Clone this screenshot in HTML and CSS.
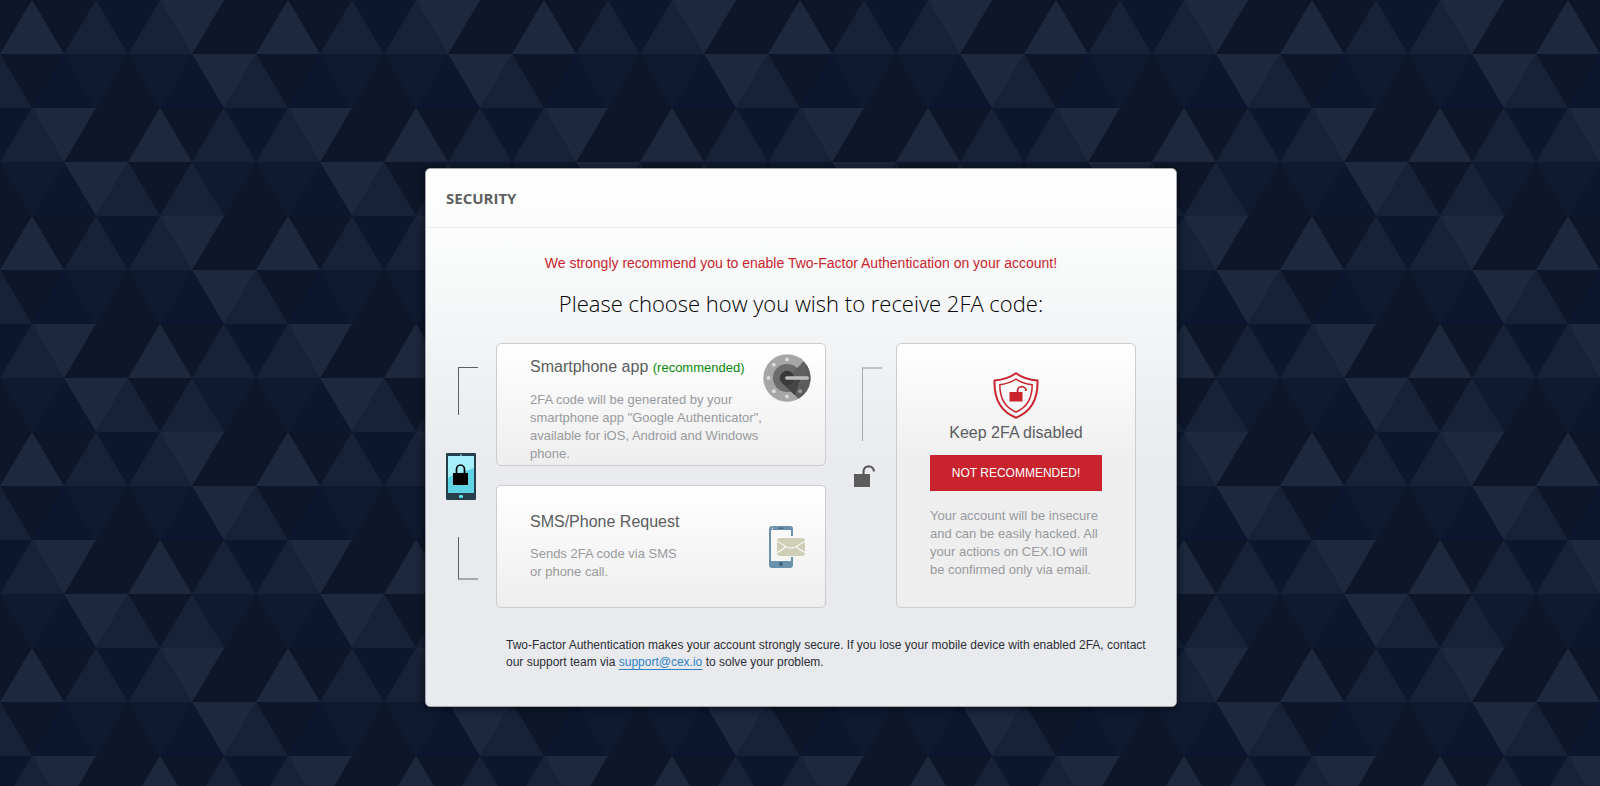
FILE: index.html
```html
<!DOCTYPE html>
<html lang="en">
<head>
    <meta charset="UTF-8">
    <meta name="viewport" content="width=device-width, initial-scale=1.0">
    <title>Security</title>
    <link rel="stylesheet" href="styles.css">
</head>
<body>

    <main class="panel">
        <header class="panel-header">
            <h1>SECURITY</h1>
        </header>

        <p class="warning">We strongly recommend you to enable Two-Factor Authentication on your account!</p>
        <h2>Please choose how you wish to receive 2FA code:</h2>

        <div class="choices">
            <!-- brackets + locked phone -->
            <div class="rail rail-on">
                <div class="bracket bracket-top"></div>
                <svg width="30" height="47" viewBox="0 0 30 47">
                    <rect width="30" height="47" rx="1" fill="#263f4b"/>
                    <rect x="2" y="3" width="26" height="37" fill="#5fd3e3"/>
                    <path d="M2 3H28V15C22 18 8 20 2 25Z" fill="#a5effb"/>
                    <rect x="14" y="1" width="2" height="2" fill="#5a9aa6"/>
                    <rect x="13" y="42" width="4" height="3" rx="1" fill="#5fe0ee"/>
                    <path d="M10.500 21V16.500a4 4.500 0 0 1 8 0V21" fill="none" stroke="#000" stroke-width="1.700"/>
                    <rect x="7" y="20" width="15" height="12" fill="#000"/>
                </svg>
                <div class="bracket bracket-bottom"></div>
            </div>

            <div class="options">
                <a href="#" class="option option-app">
                    <span class="option-text">
                        <span class="option-title">Smartphone app <small>(recommended)</small></span>
                        <span class="option-info">2FA code will be generated by your smartphone app "Google Authenticator", available for iOS, Android and Windows phone.</span>
                    </span>
                    <svg class="icon-app" width="48" height="48" viewBox="0 0 48 48">
                        <circle cx="24" cy="24" r="23.700" fill="#a6a6a6"/>
                        <path d="M34 14L40.500 7.200A23.700 23.700 0 0 1 35.500 44.700L24 33Z" fill="#5c5c5c"/>
                        <circle cx="24" cy="24" r="14" fill="#6b6b6b"/>
                        <path d="M29 19L34 14L41 7.500L44 22H30Z" fill="#606060"/>
                        <path d="M29 19L34.500 13.500L30 8L24 12Z" fill="#6b6b6b"/>
                        <path d="M30 8L24 10V4H38L40.500 7.200L34 14A14 14 0 0 0 24 10Z" fill="#a6a6a6"/>
                        <path d="M19 29L31.500 41L35 33L38 24H24Z" fill="#454545"/>
                        <circle cx="24" cy="24" r="7.200" fill="#3a3a3a"/>
                        <rect x="22" y="22.200" width="24" height="3.600" rx="1.800" fill="#bdbdbd"/>
                        <g fill="#dadada">
                            <circle cx="24" cy="5.500" r="2"/>
                            <circle cx="10.800" cy="10.800" r="2"/>
                            <circle cx="5.500" cy="24" r="2"/>
                            <circle cx="10.800" cy="37.200" r="2"/>
                            <circle cx="24" cy="42.500" r="2"/>
                            <circle cx="37.200" cy="37.200" r="2" fill="#999"/>
                        </g>
                    </svg>
                </a>

                <a href="#" class="option option-sms">
                    <span class="option-text">
                        <span class="option-title">SMS/Phone Request</span>
                        <span class="option-info">Sends 2FA code via SMS<br>or phone call.</span>
                    </span>
                    <svg class="icon-sms" width="36" height="42" viewBox="0 0 36 42">
                        <path d="M3 0H21a3 3 0 0 1 3 3V10H22V4H2V35H22V31H24V39a3 3 0 0 1-3 3H3a3 3 0 0 1-3-3V3a3 3 0 0 1 3-3Z" fill="#6b91ac"/>
                        <rect x="9.500" y="1.500" width="5" height="1.500" rx="0.700" fill="#456b85"/>
                        <circle cx="3.500" cy="2.200" r="0.800" fill="#d5e2ea"/>
                        <circle cx="12" cy="38" r="2" fill="#3f6179"/>
                        <rect x="8" y="12" width="28" height="18" rx="3" fill="#cfceb6"/>
                        <path d="M8 15.500C13 17 17 22 22 22S31 17 36 15.500M8 26.500Q13 24.500 17 20.500M36 26.500Q31 24.500 27 20.500" fill="none" stroke="#f7f7f4" stroke-width="1.200"/>
                    </svg>
                </a>
            </div>

            <!-- bracket + open lock -->
            <div class="rail rail-off">
                <div class="bracket bracket-light"></div>
                <svg width="22" height="22" viewBox="0 0 22 22">
                    <rect y="9" width="16" height="13" fill="#5c5c5c"/>
                    <path d="M9.500 10V6.500a5.200 5.200 0 0 1 10.400 0" fill="none" stroke="#5c5c5c" stroke-width="2.200"/>
                </svg>
            </div>

            <section class="option disabled-card">
                <svg width="46" height="47" viewBox="0 0 46 47" fill="none" stroke="#c9242e">
                    <path d="M23 1.200C17 5.500 9.500 7.800 1.500 8.500C1 25 5.500 39 23 45.700C40.500 39 45 25 44.500 8.500C36.500 7.800 29 5.500 23 1.200Z" stroke-width="2"/>
                    <path d="M23 7C18 10.500 12.500 12 6.800 12.700C6.800 26 11 35 23 40C35 35 39.200 26 39.200 12.700C33.500 12 28 10.500 23 7Z" stroke-width="1.500"/>
                    <rect x="16.500" y="20" width="13" height="9.500" fill="#c9242e" stroke="none"/>
                    <path d="M24.500 21V19a4.300 4.300 0 0 1 8.600 0" stroke-width="1.800"/>
                </svg>
                <h3 class="option-title">Keep 2FA disabled</h3>
                <button type="button" class="not-recommended">NOT RECOMMENDED!</button>
                <p class="option-info">Your account will be insecure and can be easily hacked. All your actions on CEX.IO will be confirmed only via email.</p>
            </section>
        </div>

        <p class="note">Two-Factor Authentication makes your account strongly secure. If you lose your mobile device with enabled 2FA, contact our support team via <a href="mailto:support@cex.io">support@cex.io</a> to solve your problem.</p>
    </main>

</body>
</html>
```
FILE: styles.css
```css
* {
    box-sizing: border-box;
}
body {
    margin: 0;
    min-height: 100vh;
    padding: 168px 16px 79px 18px;
    font-family: "Liberation Sans", Arial, sans-serif;
    background-color: #0e172a;
    /* 256x216 tile of triangles, four rows */
    background-image: url("data:image/svg+xml,%3Csvg xmlns='http://www.w3.org/2000/svg' width='256' height='216'%3E%3Cg fill='%231d273d'%3E%3Cpath d='M0 54L32 0L64 54ZM160 0H224L192 54ZM192 54H256L224 108ZM32 108H96L64 162ZM128 162L160 108L192 162ZM64 162H128L96 216Z'/%3E%3C/g%3E%3Cg fill='%23172138'%3E%3Cpath d='M64 54L96 0L128 54ZM128 54L160 0L192 54ZM-32 108L0 54L32 108ZM224 108L256 54L288 108ZM0 162L32 108L64 162ZM192 162L224 108L256 162ZM96 216L128 162L160 216ZM160 216L192 162L224 216Z'/%3E%3C/g%3E%3Cg fill='%230c172f'%3E%3Cpath d='M96 0H160L128 54ZM32 108L64 54L96 108ZM160 108L192 54L224 108ZM-32 108H32L0 162ZM224 108H288L256 162ZM32 216L64 162L96 216Z'/%3E%3C/g%3E%3Cg fill='%230f1a31'%3E%3Cpath d='M64 54H128L96 108ZM128 54H192L160 108ZM0 162H64L32 216ZM192 162H256L224 216Z'/%3E%3C/g%3E%3C/svg%3E");
}
h1, h2, h3, p {
    margin: 0;
}
.panel {
    max-width: 752px;
    margin: 0 auto;
    border: 1px solid #a3a5a8;
    border-radius: 5px;
    background: linear-gradient(#ffffff, #fafbfb 15%, #eaecef 50%, #e8eaed 65%, #e9eaed);
    box-shadow: 0 1px 8px rgba(0, 0, 0, 0.7);
}
.panel-header {
    padding: 19px 20px;
    border-bottom: 1px solid #ececec;
}
h1 {
    font-family: "Open Sans", sans-serif;
    font-size: 15px;
    line-height: 20px;
    font-weight: 700;
    color: #5f5f5f;
}
.warning {
    margin-top: 25px;
    font-size: 14px;
    line-height: 20px;
    text-align: center;
    color: #c9242e;
}
h2 {
    margin-top: 14px;
    font-family: "Open Sans", sans-serif;
    font-size: 22px;
    line-height: 32px;
    font-weight: 300;
    text-align: center;
    color: #000;
}
.choices {
    display: grid;
    grid-template-columns: 50px 11fr 70px 8fr;
    padding: 24px 40px 0 20px;
}
.rail {
    display: flex;
    flex-direction: column;
    padding: 24px 0 28px;
}
.rail-on {
    justify-content: space-between;
}
.rail-off {
    gap: 24px;
    padding-left: 28px;
}
.bracket {
    width: 20px;
    margin-left: 12px;
    border-left: 1px solid #5c5f63;
}
.bracket-top {
    height: 48px;
    border-top: 1px solid #5c5f63;
}
.bracket-bottom {
    height: 43px;
    border-bottom: 2px solid #a5a7aa;
}
.bracket-light {
    height: 74px;
    margin-left: 8px;
    border-top: 2px solid #c0c2c4;
    border-left-color: #a5a7aa;
}
.options {
    display: grid;
    grid-template-rows: 1fr 1fr;
    gap: 19px;
}
.option {
    display: flex;
    border: 1px solid #ccc;
    border-radius: 5px;
    background: linear-gradient(#ffffff, #eeeeee 121px);
    text-decoration: none;
}
.option-text {
    display: flex;
    flex-direction: column;
    flex: 1;
    gap: 13px;
    padding-left: 33px;
}
.option-app {
    padding: 13px 14px 2px 0;
}
.option-sms {
    align-items: center;
    padding-right: 20px;
}
.option-title {
    font-size: 16px;
    line-height: 20px;
    font-weight: 400;
    color: #5a5c60;
}
.option-title small {
    font-size: 13px;
    color: #0a8a0a;
}
.option-info {
    max-width: 232px;
    font-size: 13px;
    line-height: 18px;
    color: #999a9e;
}
.icon-app {
    margin-top: -3px;
    margin-left: -20px;
}
.disabled-card {
    flex-direction: column;
    align-items: center;
    padding: 28px 33px 27px;
}
.disabled-card .option-title {
    margin-top: 4px;
}
.not-recommended {
    width: 100%;
    height: 36px;
    margin: 12px 0 16px;
    padding: 0;
    border: none;
    background-color: #c9242e;
    color: white;
    font-family: inherit;
    font-size: 12px;
    cursor: pointer;
}
.note {
    padding: 29px 20px 35px 80px;
    font-size: 12px;
    line-height: 17px;
    color: #2d2d36;
}
.note a {
    color: #2d82c8;
    text-decoration: underline;
    text-decoration-skip-ink: none;
    text-underline-offset: 3px;
}
```
